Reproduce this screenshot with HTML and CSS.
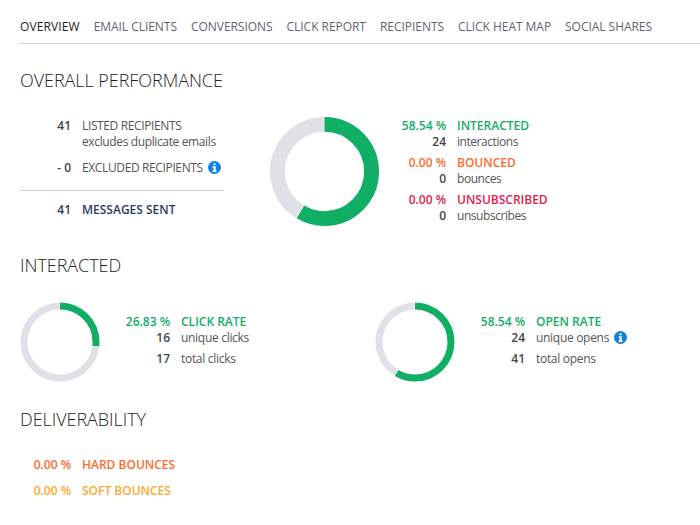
FILE: index.html
```html
<!DOCTYPE html>
<html lang="en">
<head>
<meta charset="utf-8">
<title>Overview</title>
<link rel="stylesheet" href="styles.css">
</head>
<body>
<nav class="tabs">
  <a class="tab active">OVERVIEW</a>
  <a class="tab">EMAIL CLIENTS</a>
  <a class="tab">CONVERSIONS</a>
  <a class="tab">CLICK REPORT</a>
  <a class="tab">RECIPIENTS</a>
  <a class="tab">CLICK HEAT MAP</a>
  <a class="tab">SOCIAL SHARES</a>
</nav>

<h2 class="h-overall">OVERALL PERFORMANCE</h2>
<section class="overall">
  <div class="recipients">
    <div class="row r-listed"><b class="num">41</b><div class="txt"><div>LISTED RECIPIENTS</div><div>excludes duplicate emails</div></div></div>
    <div class="row r-excl"><b class="num">- 0</b><div class="txt">EXCLUDED RECIPIENTS</div>
      <svg class="info" viewBox="0 0 14 14"><circle cx="7" cy="7" r="7" class="info-bg"/><rect x="5.8" y="2.3" width="2.4" height="2.3" rx="1.1" fill="#fff"/><path d="M5 5.7h3.3v4.6h1v1.5H5v-1.5h1V7.2H5z" fill="#fff"/></svg>
    </div>
    <div class="row r-sent"><b class="num navy">41</b><b class="txt navy bold">MESSAGES SENT</b></div>
  </div>
  <svg class="donut-lg" viewBox="0 0 110 110">
    <circle cx="55" cy="55" r="47.5" class="track" stroke-width="15" pathLength="100" stroke-dasharray="41.1 58.9" transform="rotate(121.5 55 55)"/>
    <circle cx="55" cy="55" r="47.5" class="value" stroke-width="15" pathLength="100" stroke-dasharray="58.54 41.46" transform="rotate(-90 55 55)"/>
  </svg>
  <div class="stats">
    <div class="stat"><b class="num green">58.54 %</b><b class="lbl green">INTERACTED</b></div>
    <div class="stat gap"><b class="num">24</b><span class="lbl">interactions</span></div>
    <div class="stat"><b class="num orange">0.00 %</b><b class="lbl orange">BOUNCED</b></div>
    <div class="stat gap"><b class="num">0</b><span class="lbl">bounces</span></div>
    <div class="stat"><b class="num red">0.00 %</b><b class="lbl red">UNSUBSCRIBED</b></div>
    <div class="stat"><b class="num">0</b><span class="lbl">unsubscribes</span></div>
  </div>
</section>

<h2 class="h-inter">INTERACTED</h2>
<section class="interacted">
  <div class="metric">
    <svg class="donut-sm" viewBox="0 0 80 80">
      <circle cx="40" cy="40" r="36" class="track" stroke-width="7" pathLength="100" stroke-dasharray="72.7 27.3" transform="rotate(7.3 40 40)"/>
      <circle cx="40" cy="40" r="36" class="value" stroke-width="7" pathLength="100" stroke-dasharray="26.83 73.17" transform="rotate(-90 40 40)"/>
    </svg>
    <div class="rates">
      <div class="stat"><b class="num green">26.83 %</b><b class="lbl green">CLICK RATE</b></div>
      <div class="stat gap"><b class="num">16</b><span class="lbl">unique clicks</span></div>
      <div class="stat"><b class="num">17</b><span class="lbl">total clicks</span></div>
    </div>
  </div>
  <div class="metric">
    <svg class="donut-sm" viewBox="0 0 80 80">
      <circle cx="40" cy="40" r="36" class="track" stroke-width="7" pathLength="100" stroke-dasharray="41 59" transform="rotate(121.7 40 40)"/>
      <circle cx="40" cy="40" r="36" class="value" stroke-width="7" pathLength="100" stroke-dasharray="58.54 41.46" transform="rotate(-90 40 40)"/>
    </svg>
    <div class="rates">
      <div class="stat"><b class="num green">58.54 %</b><b class="lbl green">OPEN RATE</b></div>
      <div class="stat gap"><b class="num">24</b><span class="lbl">unique opens</span>
        <svg class="info" viewBox="0 0 14 14"><circle cx="7" cy="7" r="7" class="info-bg"/><rect x="5.8" y="2.3" width="2.4" height="2.3" rx="1.1" fill="#fff"/><path d="M5 5.7h3.3v4.6h1v1.5H5v-1.5h1V7.2H5z" fill="#fff"/></svg>
      </div>
      <div class="stat"><b class="num">41</b><span class="lbl">total opens</span></div>
    </div>
  </div>
</section>

<h2 class="h-deliv">DELIVERABILITY</h2>
<section class="deliv">
  <div class="stat d-row"><b class="num orange">0.00 %</b><b class="lbl orange">HARD BOUNCES</b></div>
  <div class="stat d-row"><b class="num amber">0.00 %</b><b class="lbl amber">SOFT BOUNCES</b></div>
</section>
</body>
</html>
```
FILE: styles.css
```css
* { box-sizing: border-box; }
html, body { margin: 0; padding: 0; }
body {
  width: 700px;
  height: 525px;
  overflow: hidden;
  background: #fff;
  padding-left: 20px;
  font-family: "Open Sans", "Noto Sans", sans-serif;
  font-size: 12px;
  line-height: 16px;
  color: #555;
}
b { font-weight: 600; }

.tabs {
  display: flex;
  gap: 14px;
  height: 44px;
  padding-top: 19px;
  border-bottom: 1px solid #d2d2d2;
  letter-spacing: -0.04px;
}
.tab { color: #5f6570; }
.tab.active { color: #1c1c28; letter-spacing: 0.1px; }

h2 {
  margin: 0;
  font-weight: 300;
  font-size: 18px;
  line-height: 24px;
  color: #222;
  letter-spacing: -0.05px;
}
.h-overall { margin-top: 24px; margin-bottom: 25px; }
.h-inter { margin-top: 24px; }
.h-deliv { margin-top: 25px; }

.overall { display: flex; height: 112px; }
.recipients { width: 204px; padding-top: 1px; }
.row { display: flex; align-items: flex-start; }
.row .num { width: 51px; text-align: right; color: #444; flex: none; }
.row .txt { margin-left: 11px; letter-spacing: -0.37px; white-space: nowrap; }
.row .txt.bold { letter-spacing: 0; }
.r-excl { margin-top: 10px; }
.r-excl .info { margin-left: 5px; margin-top: 1px; }
.r-sent { margin-top: 14px; padding-top: 11px; border-top: 1px solid #d2d2d2; }
.row .navy { color: #2d3e5c; }

.info { width: 13px; height: 13px; flex: none; display: block; }
.info-bg { fill: #0a84e0; }

.donut-lg { width: 109px; height: 109px; margin-left: 46px; flex: none; }
.donut-sm { width: 80px; height: 80px; flex: none; display: block; }
circle { fill: none; }
.track { stroke: #e0e1e6; }
.value { stroke: #11ae66; }

.stats { padding-top: 1px; }
.stat { display: flex; align-items: flex-start; }
.stat .num { text-align: right; color: #444; width: 67px; flex: none; }
.stat .lbl { margin-left: 11px; white-space: nowrap; letter-spacing: -0.45px; }
.rates .stat .lbl { letter-spacing: -0.3px; }
.stat b.lbl, .rates .stat b.lbl { letter-spacing: 0; }
.stat .info { margin-left: 5px; margin-top: 1px; }
.stat.gap { margin-bottom: 5px; }

.stat .num.green, .stat .lbl.green { color: #11ae66; }
.stat .num.orange, .stat .lbl.orange { color: #ff6b2b; }
.stat .num.red, .stat .lbl.red { color: #e0224e; }
.stat .num.amber, .stat .lbl.amber { color: #ffa92e; }

.interacted { display: flex; margin-top: 25px; height: 80px; }
.metric { display: flex; align-items: flex-start; flex: none; width: 355px; }
.rates { margin-left: 3px; margin-top: 12px; }

.deliv { margin-top: 26px; }
.d-row { margin-bottom: 10px; }
.stat.d-row .num { width: 51px; }
```
